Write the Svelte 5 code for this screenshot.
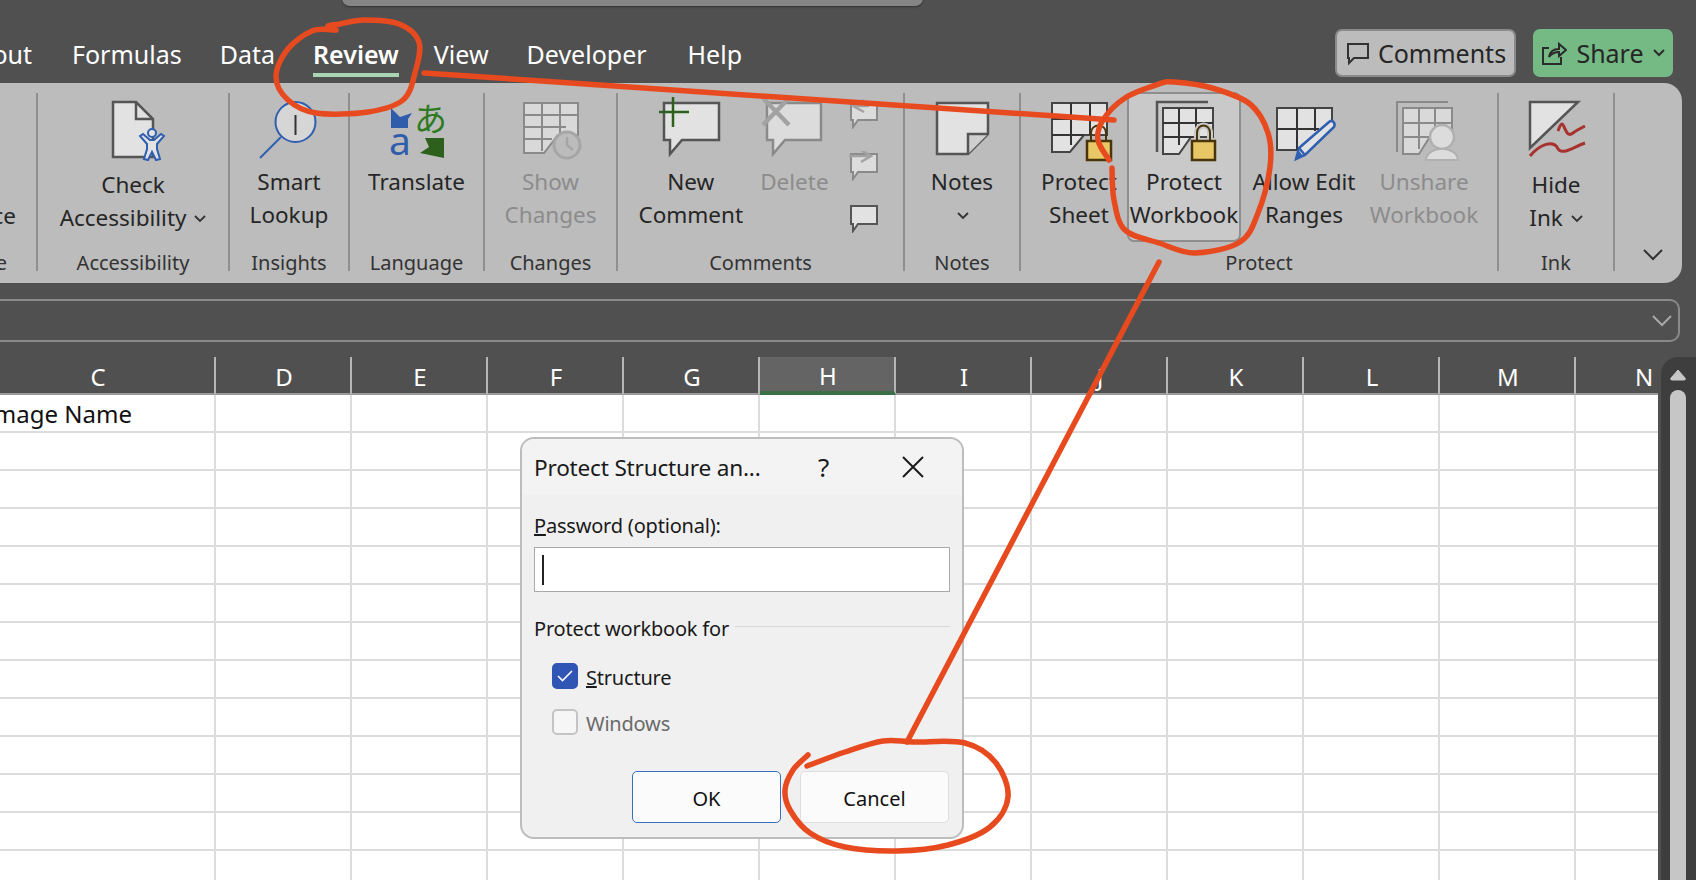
<script>
const tabs = ["Formulas", "Data", "Review", "View", "Developer", "Help"];
const columns = ["C", "D", "E", "F", "G", "H", "I", "J", "K", "L", "M", "N"];
const rows = Array.from({ length: 13 }, (_, i) => i);

// smooth line through hand-picked points, for the red pen marks
function pen(pts) {
  let d = `M${pts[0][0]} ${pts[0][1]}`;
  for (let i = 0; i < pts.length - 1; i++) {
    const p0 = pts[i - 1] || pts[i];
    const p1 = pts[i];
    const p2 = pts[i + 1];
    const p3 = pts[i + 2] || p2;
    const c1x = p1[0] + (p2[0] - p0[0]) / 6;
    const c1y = p1[1] + (p2[1] - p0[1]) / 6;
    const c2x = p2[0] - (p3[0] - p1[0]) / 6;
    const c2y = p2[1] - (p3[1] - p1[1]) / 6;
    d += ` C${c1x} ${c1y} ${c2x} ${c2y} ${p2[0]} ${p2[1]}`;
  }
  return d;
}

const marks = [
  pen([[336, 30], [328, 26], [340, 24], [364, 20], [399, 24], [419, 42], [415, 73], [403, 100], [368, 112], [316, 113], [288, 100], [276, 77], [287, 50], [312, 31], [336, 30]]),
  pen([[424, 73], [600, 85], [1114, 120]]),
  pen([[1109, 160], [1098, 140], [1103, 120], [1125, 98], [1159, 84], [1174, 82], [1212, 88], [1250, 104], [1268, 133], [1270, 167], [1258, 213], [1240, 242], [1195, 253], [1159, 243], [1125, 230], [1114, 200], [1112, 168]]),
  pen([[1159, 262], [907, 742]]),
  pen([[808, 755], [793, 770], [785, 790], [790, 810], [810, 833], [845, 847], [897, 851], [948, 845], [990, 827], [1008, 797], [996, 763], [965, 743], [914, 742], [883, 741], [845, 752], [807, 766]])
];
</script>

<div class="page">
  <header class="topbar">
    <div class="search"></div>
    <nav class="tabs">
      <span class="clip"><span class="tab">Layout</span></span>
      {#each tabs as t}
        <span class="tab" class:active={t === "Review"}>{t}</span>
      {/each}
    </nav>
    <div class="actions">
      <button class="comments">
        <svg width="24" height="26" viewBox="0 0 24 26"><path d="M3 4H23V18H9L4 23V18H3Z" fill="none" stroke="#333" stroke-width="2"/></svg>
        Comments
      </button>
      <button class="share">
        <svg width="26" height="26" viewBox="0 0 26 26" fill="none" stroke="#2b2b2b" stroke-width="2"><path d="M8 8H2V24H20V17"/><path d="M8 17C9 11 13 9 18 9V4L25 10L18 16V12C14 12 11 13 8 17Z"/></svg>
        Share
        <svg width="12" height="8" viewBox="0 0 12 8" fill="none" stroke="#2b2b2b" stroke-width="2"><path d="M1 1L6 6L11 1"/></svg>
      </button>
    </div>
  </header>

  <section class="ribbon">
    <div class="group g-perf">
      <div class="perf">Performance</div>
      <div class="glabel perf-label">Performance</div>
    </div>

    <div class="group g-acc">
      <div class="btns">
        <div class="btn w-full">
          <svg class="ico" viewBox="0 0 70 70">
            <path d="M15 7H38L55 24V62H15Z" class="sheet"/>
            <path d="M38 7V24H55" fill="none" stroke="#555" stroke-width="2.5"/>
            <g fill="#e2e2e2" stroke="#2f5fb0" stroke-width="2"><circle cx="54" cy="38" r="4"/><path d="M42 41L45 39L52 45H56L63 39L66 41L59 49V54L62 64L58 65L54 57L50 65L46 64L49 54V49Z"/></g>
          </svg>
          <span class="lab low"><span>Check</span><span>Accessibility <svg class="chev" viewBox="0 0 12 8"><path d="M1 1L6 6L11 1"/></svg></span></span>
        </div>
      </div>
      <div class="glabel">Accessibility</div>
    </div>

    <div class="group g-ins">
      <div class="btns">
        <div class="btn w-full">
          <svg class="ico" viewBox="0 0 70 70">
            <circle cx="41.5" cy="27" r="20" fill="#d6d6d6" stroke="#2f5fb0" stroke-width="2"/>
            <path d="M27 42L6 63" stroke="#2f5fb0" stroke-width="2"/>
            <path d="M41.5 20V40" stroke="#333" stroke-width="2"/>
          </svg>
          <span class="lab"><span>Smart</span><span>Lookup</span></span>
        </div>
      </div>
      <div class="glabel">Insights</div>
    </div>

    <div class="group g-lang">
      <div class="btns">
        <div class="btn w-full">
          <svg class="ico" viewBox="0 0 70 70">
            <path d="M9 13L18 22L30 18L26 24V33H9Z" fill="#2f5cab"/>
            <text x="7" y="60" class="tr-a">a</text>
            <text x="32" y="36" class="tr-j">あ</text>
            <path d="M62 43V63L38 58L47 52L43 43Z" fill="#2d5f1d"/>
          </svg>
          <span class="lab"><span>Translate</span></span>
        </div>
      </div>
      <div class="glabel">Language</div>
    </div>

    <div class="group g-chg">
      <div class="btns">
        <div class="btn w-full off">
          <svg class="ico" viewBox="0 0 70 70">
            <path d="M8 8H62V40H42L28 58H8Z" fill="#d9d9d9" stroke="#8a8a8a" stroke-width="2"/>
            <path d="M8 20H62M8 32H50M8 44H36M26 8V56M44 8V38" stroke="#8a8a8a" stroke-width="2" fill="none"/>
            <circle cx="51" cy="50" r="13" fill="#bcbcbc" stroke="#a6a6a6" stroke-width="3"/>
            <path d="M51 42V50L57 55" fill="none" stroke="#a6a6a6" stroke-width="2.5"/>
          </svg>
          <span class="lab"><span>Show</span><span>Changes</span></span>
        </div>
      </div>
      <div class="glabel">Changes</div>
    </div>

    <div class="group g-com">
      <div class="btns pad">
        <div class="btn w-new">
          <svg class="ico" viewBox="0 0 70 70">
            <path d="M8 8H63V45H26L14 59V45H8Z" class="sheet"/>
            <path d="M3 17H33M17 2V32" stroke="#2d5f1d" stroke-width="2.5"/>
          </svg>
          <span class="lab"><span>New</span><span>Comment</span></span>
        </div>
        <div class="btn w-del off">
          <svg class="ico" viewBox="0 0 70 70">
            <path d="M8 8H62V45H26L14 59V45H8Z" fill="#dcdcdc" stroke="#8a8a8a" stroke-width="2.5"/>
            <path d="M4 3L30 30M30 3L4 30" stroke="#a2a2a2" stroke-width="4.5"/>
          </svg>
          <span class="lab"><span>Delete</span></span>
        </div>
        <div class="mini w-mini">
          <svg class="tiny" viewBox="0 0 30 30"><path d="M2 3H28V21H9L4 28V21H2Z" fill="#dcdcdc" stroke="#8a8a8a" stroke-width="2"/><path d="M15 1L4 7L15 13M4 7H20" fill="none" stroke="#a2a2a2" stroke-width="2.5"/></svg>
          <svg class="tiny" viewBox="0 0 30 30"><path d="M2 3H28V21H9L4 28V21H2Z" fill="#dcdcdc" stroke="#8a8a8a" stroke-width="2"/><path d="M12 -1L22 5L12 11M0 5H22" fill="none" stroke="#a2a2a2" stroke-width="2.5"/></svg>
          <svg class="tiny" viewBox="0 0 30 30"><path d="M2 3H28V21H9L4 28V21H2Z" fill="#e2e2e2" stroke="#555" stroke-width="2"/></svg>
        </div>
      </div>
      <div class="glabel">Comments</div>
    </div>

    <div class="group g-notes">
      <div class="btns">
        <div class="btn w-full">
          <svg class="ico" viewBox="0 0 70 70">
            <path d="M10 8H61V39L41 59H10Z" class="sheet"/>
            <path d="M41 59V39H61" fill="#cfcfcf" stroke="#555" stroke-width="2.5"/>
          </svg>
          <span class="lab"><span>Notes</span><span><svg class="chev" viewBox="0 0 12 8"><path d="M1 1L6 6L11 1"/></svg></span></span>
        </div>
      </div>
      <div class="glabel">Notes</div>
    </div>

    <div class="group g-prot">
      <div class="btns prot">
        <div class="btn w-sheet">
          <svg class="ico" viewBox="0 0 70 70">
            <path d="M8 8H63V40H40L26 57H8Z" class="cells"/>
            <path d="M8 24H63M8 40H40M27 8V50M46 8V40" class="gridl"/>
            <path d="M47 46V38C47 28 62 28 62 38V46" fill="none" stroke="#4a3508" stroke-width="2"/>
            <rect x="43" y="46" width="24" height="19" fill="#e8c766" stroke="#4a3508" stroke-width="2.5"/>
          </svg>
          <span class="lab"><span>Protect</span><span>Sheet</span></span>
        </div>
        <div class="btn w-wb hot">
          <svg class="ico" viewBox="0 0 70 70">
            <path d="M8 57V7H59" fill="none" stroke="#555" stroke-width="2.5"/>
            <path d="M14 13H64V42H42L30 59H14Z" class="cells"/>
            <path d="M14 28H64M14 42H44M30 13V50M47 13V42" class="gridl"/>
            <path d="M48 46V38C48 28 61 28 61 38V46" fill="none" stroke="#c9c9c9" stroke-width="6"/>
            <path d="M48 46V38C48 28 61 28 61 38V46" fill="none" stroke="#4a3508" stroke-width="2"/>
            <rect x="43" y="46" width="23" height="19" fill="#e8c766" stroke="#4a3508" stroke-width="2.5"/>
          </svg>
          <span class="lab"><span>Protect</span><span>Workbook</span></span>
        </div>
        <div class="btn w-allow">
          <svg class="ico" viewBox="0 0 70 70">
            <path d="M8 13H63V30L36 55H8Z" class="cells"/>
            <path d="M8 34H50M28 13V55M46 13V36" class="gridl"/>
            <path d="M27 64L30 53L60 27C63 24 67 28 65 32L36 60Z" fill="#e2e2e2" stroke="#2f5fb0" stroke-width="2.5"/>
            <path d="M30 53L36 60" stroke="#2f5fb0" stroke-width="2.5"/>
            <path d="M27 64L30 56L34 61Z" fill="#2f5fb0"/>
          </svg>
          <span class="lab"><span>Allow Edit</span><span>Ranges</span></span>
        </div>
        <div class="btn w-wb off">
          <svg class="ico" viewBox="0 0 70 70">
            <path d="M8 57V7H59" fill="none" stroke="#8a8a8a" stroke-width="2"/>
            <path d="M14 13H63V40H42L30 59H14Z" fill="#d9d9d9" stroke="#8a8a8a" stroke-width="2"/>
            <path d="M14 28H63M14 42H42M30 13V54M46 13V40" stroke="#8a8a8a" stroke-width="2" fill="none"/>
            <circle cx="53" cy="42" r="12" fill="#dcdcdc" stroke="#b0b0b0" stroke-width="2.5"/>
            <path d="M37 65C38 50 68 50 69 65Z" fill="#dcdcdc" stroke="#b0b0b0" stroke-width="2"/>
          </svg>
          <span class="lab"><span>Unshare</span><span>Workbook</span></span>
        </div>
      </div>
      <div class="glabel">Protect</div>
    </div>

    <div class="group g-ink">
      <div class="btns">
        <div class="btn w-full">
          <svg class="ico" viewBox="0 0 70 70">
            <path d="M9 7H57L9 53Z" class="sheet"/>
            <path d="M37 36C44 16 42 46 52 38C56 35 60 33 64 31" fill="none" stroke="#a8332e" stroke-width="3"/>
            <path d="M9 61C20 48 32 46 36 52C40 62 52 52 64 48" fill="none" stroke="#a8332e" stroke-width="3"/>
          </svg>
          <span class="lab low"><span>Hide</span><span>Ink <svg class="chev" viewBox="0 0 12 8"><path d="M1 1L6 6L11 1"/></svg></span></span>
        </div>
      </div>
      <div class="glabel">Ink</div>
    </div>

    <div class="collapse">
      <svg width="20" height="12" viewBox="0 0 20 12" fill="none" stroke="#333" stroke-width="2"><path d="M1 1L10 10L19 1"/></svg>
    </div>
  </section>

  <div class="formula">
    <svg width="20" height="12" viewBox="0 0 20 12" fill="none" stroke="#a8a8a8" stroke-width="2"><path d="M1 1L10 10L19 1"/></svg>
  </div>

  <main class="sheet-wrap">
    <div class="grid">
      {#each columns as c}
        <div class="head" class:sel={c === "H"}>{c}</div>
      {/each}
      {#each rows as r}
        {#each columns as c}
          <div class="cell" class:name={r === 0 && c === "C"}>
            {#if r === 0 && c === "C"}<span>Image Name</span>{/if}
          </div>
        {/each}
      {/each}
    </div>
    <div class="vscroll">
      <svg width="18" height="13" viewBox="0 0 18 13"><path d="M9 2L16 10Q17 12 15 12H3Q1 12 2 10Z" fill="#c6c6c6" stroke="#c6c6c6"/></svg>
      <div class="thumb"></div>
    </div>
  </main>

  <div class="dialog">
    <div class="dtitle">
      <span class="dname">Protect Structure an...</span>
      <span class="dhelp">?</span>
      <svg width="22" height="22" viewBox="0 0 22 22" stroke="#1a1a1a" stroke-width="2"><path d="M1 1L21 21M21 1L1 21"/></svg>
    </div>
    <div class="dbody">
      <div class="dlabel"><u>P</u>assword (optional):</div>
      <div class="dinput"><i></i></div>
      <div class="dgroup"><span>Protect workbook for</span><b></b></div>
      <div class="check">
        <span class="box on"><svg width="16" height="12" viewBox="0 0 16 12" fill="none" stroke="#fff" stroke-width="1.6"><path d="M1 6L5.5 10.5L15 1"/></svg></span>
        <span class="ctext"><u>S</u>tructure</span>
      </div>
      <div class="check dim">
        <span class="box"></span>
        <span class="ctext">Windows</span>
      </div>
      <div class="dbtns">
        <button class="default">OK</button>
        <button>Cancel</button>
      </div>
    </div>
  </div>

  <svg class="marks" width="1696" height="880" viewBox="0 0 1696 880">
    {#each marks as d}
      <path {d}/>
    {/each}
  </svg>
</div>

<style>
:global(body) {
  margin: 0;
  background: #505050;
}
.page {
  position: relative;
  width: 1696px;
  height: 880px;
  overflow: hidden;
  background: #505050;
  font-family: "Noto Sans", "Open Sans", sans-serif;
  color: #262626;
}

.topbar {
  position: relative;
  display: flex;
  justify-content: space-between;
  height: 83px;
  padding-right: 23px;
  box-sizing: border-box;
}
.search {
  position: absolute;
  left: 342px;
  top: -10px;
  width: 581px;
  height: 16px;
  background: #858585;
  border-radius: 8px;
  box-shadow: 0 1px 2px #333;
}
.tabs {
  display: flex;
  gap: 38px;
  margin-top: 37px;
  height: 40px;
}
.clip {
  width: 32px;
  margin-right: 2px;
  display: flex;
  justify-content: flex-end;
  overflow: hidden;
}
.tab {
  color: #fff;
  font-size: 25px;
  line-height: 34px;
  padding-bottom: 2px;
  border-bottom: 4px solid transparent;
  white-space: nowrap;
}
.tab.active {
  font-weight: 600;
  margin-right: -3px;
  border-bottom-color: #a9d5b5;
}
.tab:last-child {
  margin-left: 3px;
}
.actions {
  display: flex;
  gap: 17px;
  margin-top: 29px;
  height: 48px;
}
.actions button {
  display: flex;
  align-items: center;
  box-sizing: border-box;
  height: 48px;
  font: inherit;
  font-size: 25px;
  color: #262626;
  border-radius: 7px;
}
.comments {
  width: 181px;
  justify-content: center;
  gap: 9px;
  padding: 0;
  background: #bcbcbc;
  border: 2px solid #8a8a8a;
}
.share {
  width: 140px;
  justify-content: center;
  gap: 9px;
  padding: 0;
  background: #75b985;
  border: none;
}

.ribbon {
  display: flex;
  height: 200px;
  width: 1682px;
  box-sizing: border-box;
  padding: 10px 0 12px;
  background: #bcbcbc;
  border-radius: 0 18px 18px 0;
}
.group {
  display: flex;
  flex-direction: column;
  justify-content: space-between;
  box-sizing: border-box;
  border-right: 2px solid #8f8f8f;
  height: 178px;
}
.g-perf { width: 38px; overflow: hidden; align-items: flex-end; }
.g-acc { width: 192px; }
.g-ins { width: 120px; }
.g-lang { width: 135px; }
.g-chg { width: 133px; }
.g-com { width: 287px; }
.g-notes { width: 116px; }
.g-prot { width: 478px; }
.g-ink { width: 116px; }
.collapse {
  flex: 1;
  display: flex;
  justify-content: center;
  align-items: flex-end;
  padding-left: 8px;
  height: 168px;
}
.btns {
  display: flex;
  margin-top: -1px;
}
.btns.pad { padding: 0 8px; }
.btns.prot { padding-left: 10px; }
.btn {
  display: flex;
  flex-direction: column;
  align-items: center;
  box-sizing: border-box;
  height: 150px;
  padding-top: 1px;
  border: 2px solid transparent;
  border-radius: 7px;
}
.btn.hot {
  background: #c9c9c9;
  border-color: #8e8e8e;
}
.perf {
  margin: 106px 20px 0 0;
  font-size: 22.5px;
  line-height: 33px;
  white-space: nowrap;
}
.perf-label {
  margin-right: 29px;
}
.w-full { width: 100%; }
.w-new { width: 130px; }
.w-del { width: 78px; }
.w-mini { width: 62px; }
.w-sheet { width: 96px; }
.w-wb { width: 114px; }
.w-allow { width: 126px; }
.ico {
  width: 70px;
  height: 70px;
  flex: none;
  overflow: visible;
}
.sheet { fill: #e2e2e2; stroke: #555; stroke-width: 2.5; }
.cells { fill: #e2e2e2; stroke: #444; stroke-width: 2; }
.gridl { stroke: #333; stroke-width: 2; fill: none; }
.tr-a { font-size: 39px; fill: #2f5cab; font-family: "Noto Sans", sans-serif; }
.tr-j { font-size: 33px; fill: #2d7a22; font-family: "Noto Sans CJK JP", sans-serif; }
.lab {
  display: flex;
  flex-direction: column;
  align-items: center;
  margin-top: 0;
  font-size: 22.5px;
  line-height: 33px;
  white-space: nowrap;
  color: #262626;
}
.lab.low { margin-top: 3px; }
.off .lab { color: #8c8c8c; }
.chev {
  width: 12px;
  height: 8px;
  margin-left: 2px;
  vertical-align: 3px;
  fill: none;
  stroke: #333;
  stroke-width: 1.8;
}
.mini {
  display: flex;
  flex-direction: column;
  align-items: center;
  gap: 22px;
  padding-top: 7px;
}
.tiny {
  width: 30px;
  height: 30px;
}
.glabel {
  text-align: center;
  font-size: 20px;
  line-height: 16px;
  color: #333;
  white-space: nowrap;
}

.formula {
  display: flex;
  justify-content: flex-end;
  align-items: center;
  width: 1680px;
  height: 43px;
  margin: 16px 0 15px;
  padding-right: 6px;
  box-sizing: border-box;
  border: 2px solid #8a8a8a;
  border-left: 0;
  border-radius: 0 10px 10px 0;
}

.sheet-wrap {
  display: flex;
  gap: 3px;
  height: 523px;
}
.grid {
  display: grid;
  grid-template-columns: 216px repeat(11, 136px);
  grid-template-rows: 38px;
  grid-auto-rows: 38px;
  width: 1658px;
  overflow: hidden;
  flex: none;
  background: #fff;
}
.head {
  display: flex;
  align-items: center;
  justify-content: center;
  box-sizing: border-box;
  padding: 3px 0 0 2px;
  background: #505050;
  color: #fff;
  font-size: 24px;
  border-right: 2px solid #b5b5b5;
  border-bottom: 2px solid #9a9a9a;
}
.head:first-child {
  padding-right: 20px;
}
.head.sel {
  background: #646464;
  border-bottom: 4px solid #3a7048;
}
.cell {
  box-sizing: border-box;
  border-right: 2px solid #dcdcdc;
  border-bottom: 2px solid #dcdcdc;
}
.cell.name {
  display: flex;
  justify-content: flex-end;
  align-items: center;
  padding: 1px 82px 0 0;
  overflow: hidden;
  font-size: 24px;
  color: #111;
  white-space: nowrap;
}
.vscroll {
  display: flex;
  flex-direction: column;
  align-items: center;
  gap: 9px;
  flex: 1;
  padding: 11px 1px 0 0;
  background: #3e3e3e;
  border-radius: 17px 0 0 0;
  box-sizing: border-box;
  height: 523px;
}
.thumb {
  flex: 1;
  width: 16px;
  background: #c6c6c6;
  border-radius: 8px 8px 0 0;
}

.dialog {
  position: absolute;
  left: 520px;
  top: 437px;
  width: 444px;
  height: 402px;
  box-sizing: border-box;
  background: #f0f0f0;
  border: 2px solid #bdbdbd;
  border-radius: 14px;
  font-size: 20px;
  letter-spacing: -0.2px;
  color: #1a1a1a;
}
.dtitle {
  display: flex;
  align-items: center;
  height: 56px;
  padding-left: 12px;
  background: #f3f3f3;
  border-radius: 12px 12px 0 0;
}
.dname {
  width: 280px;
  font-size: 22.6px;
}
.dhelp {
  width: 88px;
  padding-left: 4px;
  box-sizing: border-box;
  font-size: 26px;
}
.dbody {
  padding: 18px 12px 0;
}
.dlabel {
  line-height: 26px;
  height: 26px;
}
.dinput {
  display: flex;
  align-items: center;
  height: 45px;
  margin-top: 8px;
  padding-left: 7px;
  box-sizing: border-box;
  background: #fff;
  border: 1.5px solid #aaa;
}
.dinput i {
  display: block;
  width: 2px;
  height: 30px;
  background: #222;
}
.dgroup {
  display: flex;
  align-items: center;
  gap: 6px;
  height: 26px;
  margin-top: 23px;
}
.dgroup b {
  flex: 1;
  height: 1px;
  margin-bottom: 4px;
  background: #d8d8d8;
}
.check {
  display: flex;
  align-items: center;
  gap: 8px;
  height: 26px;
  margin: 22px 0 0 18px;
}
.ctext {
  padding-top: 2px;
}
.check.dim {
  margin-top: 20px;
  color: #6a6a6a;
}
.box {
  display: flex;
  align-items: center;
  justify-content: center;
  width: 26px;
  height: 26px;
  box-sizing: border-box;
  background: #f6f6f6;
  border: 2px solid #c4c4c4;
  border-radius: 5px;
}
.box.on {
  background: #2f55b5;
  border-color: #2f55b5;
}
.dbtns {
  display: flex;
  justify-content: flex-end;
  gap: 19px;
  margin-top: 36px;
  padding-right: 1px;
}
.dbtns button {
  width: 149px;
  height: 52px;
  padding: 2px 0 0;
  font: inherit;
  color: #111;
  background: #fbfbfb;
  border: 1.5px solid #dedede;
  border-radius: 5px;
}
.dbtns .default {
  border-color: #3a6fc0;
}

.marks {
  position: absolute;
  left: 0;
  top: 0;
  pointer-events: none;
}
.marks path {
  fill: none;
  stroke: #e84a1f;
  stroke-width: 5.5;
  stroke-linecap: round;
  stroke-linejoin: round;
}
</style>
